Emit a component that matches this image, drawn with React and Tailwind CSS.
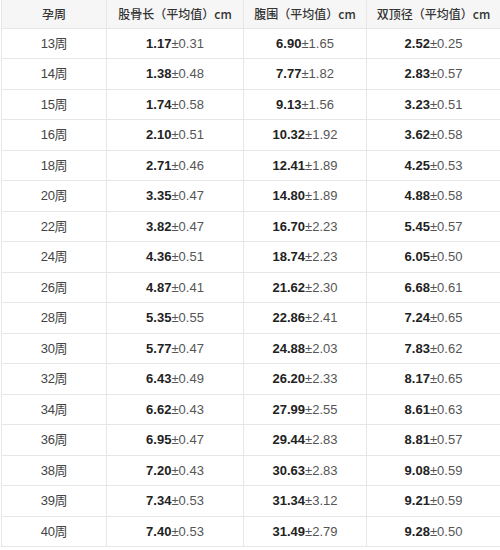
const ROWS = [
  ['13周', '1.17', '0.31', '6.90', '1.65', '2.52', '0.25'],
  ['14周', '1.38', '0.48', '7.77', '1.82', '2.83', '0.57'],
  ['15周', '1.74', '0.58', '9.13', '1.56', '3.23', '0.51'],
  ['16周', '2.10', '0.51', '10.32', '1.92', '3.62', '0.58'],
  ['18周', '2.71', '0.46', '12.41', '1.89', '4.25', '0.53'],
  ['20周', '3.35', '0.47', '14.80', '1.89', '4.88', '0.58'],
  ['22周', '3.82', '0.47', '16.70', '2.23', '5.45', '0.57'],
  ['24周', '4.36', '0.51', '18.74', '2.23', '6.05', '0.50'],
  ['26周', '4.87', '0.41', '21.62', '2.30', '6.68', '0.61'],
  ['28周', '5.35', '0.55', '22.86', '2.41', '7.24', '0.65'],
  ['30周', '5.77', '0.47', '24.88', '2.03', '7.83', '0.62'],
  ['32周', '6.43', '0.49', '26.20', '2.33', '8.17', '0.65'],
  ['34周', '6.62', '0.43', '27.99', '2.55', '8.61', '0.63'],
  ['36周', '6.95', '0.47', '29.44', '2.83', '8.81', '0.57'],
  ['38周', '7.20', '0.43', '30.63', '2.83', '9.08', '0.59'],
  ['39周', '7.34', '0.53', '31.34', '3.12', '9.21', '0.59'],
  ['40周', '7.40', '0.53', '31.49', '2.79', '9.28', '0.50'],
]

const HEADERS = ['孕周', '股骨长（平均值）cm', '腹围（平均值）cm', '双顶径（平均值）cm']

const font = { fontFamily: '"Liberation Sans", "Noto Sans CJK SC", sans-serif' }

function Value({ mean, sd }) {
  return (
    <span>
      <span className="font-bold text-[#222]">{mean}</span>
      <span className="text-[#555]">±{sd}</span>
    </span>
  )
}

export default function App() {
  return (
    <div className="w-[500px] h-[550px] bg-white overflow-hidden" style={font}>
      <div className="ml-px grid grid-cols-[105px_137px_123px_134px] border-l border-[#e6e6e6] text-[13px]">
        {HEADERS.map((h) => (
          <div
            key={h}
            className="h-[28.5px] flex items-center justify-center bg-[#f6f6f6] border-b border-r border-[#e6e6e6] text-[#333] font-medium text-[12px]"
            style={{ fontFamily: '"Noto Sans CJK SC", "Liberation Sans", sans-serif' }}
          >
            {h}
          </div>
        ))}
        {ROWS.map((r) => (
          <div key={r[0]} className="contents">
            <div className="h-[30.5px] flex items-center justify-center border-b border-r border-[#e6e6e6] text-[#444] tracking-tight">
              {r[0]}
            </div>
            <div className="h-[30.5px] flex items-center justify-center border-b border-r border-[#e6e6e6]">
              <Value mean={r[1]} sd={r[2]} />
            </div>
            <div className="h-[30.5px] flex items-center justify-center border-b border-r border-[#e6e6e6]">
              <Value mean={r[3]} sd={r[4]} />
            </div>
            <div className="h-[30.5px] flex items-center justify-center border-b border-r border-[#e6e6e6]">
              <Value mean={r[5]} sd={r[6]} />
            </div>
          </div>
        ))}
      </div>
    </div>
  )
}
